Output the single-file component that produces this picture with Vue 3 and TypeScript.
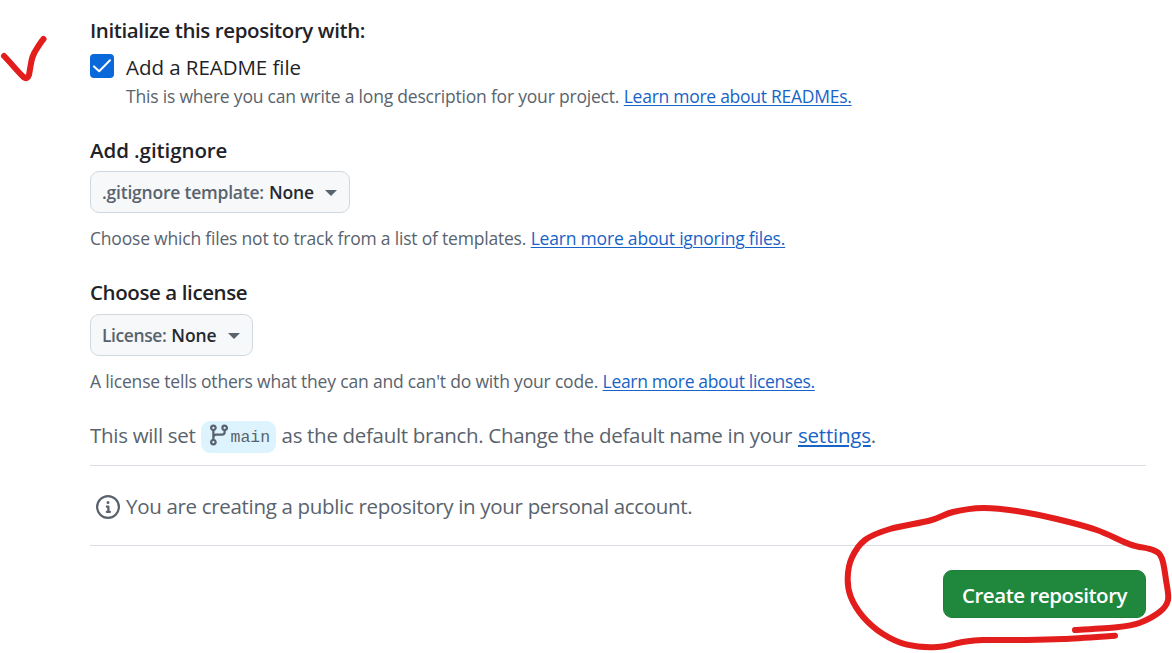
<script setup lang="ts">
import { ref } from 'vue'

const addReadme = ref(true)

type Point = [number, number]

const loop: Point[] = [
  [1115, 635.7], [1063, 639], [1027, 640], [983, 640], [963, 642], [937, 647], [907, 644.7],
  [883, 634], [863, 616.7], [850.7, 596.7], [847.7, 578], [851.7, 558], [865, 540], [890, 529],
  [930, 520.5], [953, 512], [983, 508], [1016.7, 511], [1056.7, 519], [1096.7, 530],
  [1130, 544.3], [1153, 550], [1161.7, 558], [1166, 580], [1168, 600], [1160, 611.7],
  [1140, 622.7], [1116.7, 627.3], [1075, 630],
]

// Smooth curve through all points (Catmull-Rom converted to cubic Béziers).
function smooth(points: Point[]): string {
  let d = `M${points[0][0]} ${points[0][1]}`
  for (let i = 0; i < points.length - 1; i++) {
    const a = points[Math.max(i - 1, 0)]
    const b = points[i]
    const c = points[i + 1]
    const e = points[Math.min(i + 2, points.length - 1)]
    d += `C${b[0] + (c[0] - a[0]) / 6} ${b[1] + (c[1] - a[1]) / 6} ${c[0] - (e[0] - b[0]) / 6} ${c[1] - (e[1] - b[1]) / 6} ${c[0]} ${c[1]}`
  }
  return d
}

const loopPath = smooth(loop)
</script>

<template>
  <main class="page">
    <form class="form" @submit.prevent>
      <h3 class="title t-init">Initialize this repository with:</h3>
      <div class="check-row">
        <button type="button" class="box" :class="{ on: addReadme }" @click="addReadme = !addReadme">
          <svg v-if="addReadme" width="24" height="24" viewBox="0 0 24 24" fill="none">
            <path d="M4 12.400 9.200 17.200 20 6.200" stroke="#fff" stroke-width="2" stroke-linecap="round" stroke-linejoin="round" />
          </svg>
        </button>
        <span class="check-label">Add a README file</span>
      </div>
      <p class="hint indent"><span class="h-readme">This is where you can write a long description for your project.</span> <a class="l-readme">Learn more about READMEs.</a></p>

      <h3 class="title gap t-git">Add .gitignore</h3>
      <button type="button" class="select s-git">
        <span class="key k-git">.gitignore template:</span><span class="val">None</span><i class="caret"></i>
      </button>
      <p class="hint under"><span class="h-git">Choose which files not to track from a list of templates.</span> <a class="l-git">Learn more about ignoring files.</a></p>

      <h3 class="title gap t-lic">Choose a license</h3>
      <button type="button" class="select s-lic">
        <span class="key k-lic">License:</span><span class="val">None</span><i class="caret"></i>
      </button>
      <p class="hint under"><span class="h-lic">A license tells others what they can and can't do with your code.</span> <a class="l-lic">Learn more about licenses.</a></p>

      <div class="branch-row">
        <span class="b-text b-start">This will set</span>
        <span class="branch">
          <svg width="24" height="24" viewBox="0 0 16 16" fill="#59636e">
            <path d="M9.5 3.25a2.25 2.25 0 1 1 3 2.122V6A2.5 2.5 0 0 1 10 8.5H6a1 1 0 0 0-1 1v1.128a2.251 2.251 0 1 1-1.5 0V5.372a2.25 2.25 0 1 1 1.5 0v1.836A2.493 2.493 0 0 1 6 7h4a1 1 0 0 0 1-1v-.628A2.25 2.25 0 0 1 9.5 3.25Zm-6 0a.75.75 0 1 0 1.5 0 .75.75 0 0 0-1.5 0Zm8.25-.75a.75.75 0 1 0 0 1.5.75.75 0 0 0 0-1.5ZM4.25 12a.75.75 0 1 0 0 1.5.75.75 0 0 0 0-1.5Z" />
          </svg>
          <code>main</code>
        </span>
        <span class="b-text b-end">as the default branch. Change the default name in your</span>
        <a class="b-text settings">settings</a><span class="b-text">.</span>
      </div>

      <div class="notice">
        <svg width="24" height="24" viewBox="0 0 16 16" fill="#59636e">
          <path d="M0 8a8 8 0 1 1 16 0A8 8 0 0 1 0 8Zm8-6.5a6.5 6.5 0 1 0 0 13 6.5 6.5 0 0 0 0-13ZM6.5 7.75A.75.75 0 0 1 7.25 7h1a.75.75 0 0 1 .75.75v2.75h.25a.75.75 0 0 1 0 1.5h-2a.75.75 0 0 1 0-1.5h.25v-2h-.25a.75.75 0 0 1-.75-.75ZM8 6a1 1 0 1 1 0-2 1 1 0 0 1 0 2Z" />
        </svg>
        <span class="n-text">You are creating a public repository in your personal account.</span>
      </div>

      <div class="actions">
        <button type="submit" class="create"><span>Create repository</span></button>
      </div>
    </form>

    <svg class="ink" width="1172" height="653" viewBox="0 0 1172 653" fill="none" stroke="#e31c1c" stroke-width="6" stroke-linecap="round" stroke-linejoin="round">
      <path d="M4 56C11 63 17 71 23.500 77Q27.500 80 29 75C31.500 62 31 57 36 50C39 45 41 42 43.500 39" />
      <path :d="loopPath" />
    </svg>
  </main>
</template>

<style>
body {
  margin: 0;
  background: #fff;
}
</style>

<style scoped>
.page {
  position: relative;
  width: 1172px;
  height: 653px;
  overflow: hidden;
  box-sizing: border-box;
  padding: 15px 26px 0 90px;
  background: #fff;
  color: #1f2328;
  font-family: 'Open Sans', 'Noto Sans', sans-serif;
}
.form {
  display: flex;
  flex-direction: column;
}
button {
  font-family: inherit;
  margin: 0;
  padding: 0;
}
.title {
  margin: 0;
  height: 32px;
  line-height: 30px;
  font-size: 20.5px;
  font-weight: 600;
  white-space: nowrap;
}
.title.gap {
  margin-top: 24px;
}
.t-init {
  letter-spacing: -0.4px;
}
.t-git {
  letter-spacing: -0.08px;
}
.t-lic {
  letter-spacing: -0.4px;
}
.check-row {
  display: flex;
  gap: 12px;
  height: 32px;
  margin-top: 4px;
}
.box {
  width: 24px;
  height: 24px;
  margin-top: 3px;
  border: 1px solid #818b98;
  border-radius: 4px;
  background: #fff;
  box-sizing: border-box;
}
.box.on {
  border: 0;
  background: #0969da;
}
.box svg {
  display: block;
}
.check-label {
  font-size: 20.5px;
  line-height: 33px;
  letter-spacing: -0.05px;
}
.hint {
  margin: 0;
  height: 28px;
  line-height: 26px;
  font-size: 17.5px;
  color: #59636e;
  white-space: nowrap;
}
.h-readme,
.h-git {
  letter-spacing: -0.2px;
}
.h-lic {
  letter-spacing: -0.18px;
}
.l-readme {
  letter-spacing: -0.27px;
}
.l-git {
  letter-spacing: -0.2px;
}
.l-lic {
  letter-spacing: -0.33px;
}
.indent {
  padding-left: 36px;
}
.under {
  margin-top: 12px;
}
a {
  color: #1763c7;
  text-decoration: underline;
  text-decoration-thickness: 1px;
  text-underline-offset: 2px;
}
.select {
  display: flex;
  align-items: center;
  box-sizing: border-box;
  height: 42px;
  margin-top: 4px;
  padding: 0 12px 0 11px;
  border: 1px solid #d1d9e0;
  border-radius: 9px;
  background: #f6f8fa;
  font-size: 17.5px;
  font-weight: 600;
  white-space: nowrap;
}
.s-git {
  width: 260px;
}
.s-lic {
  width: 163px;
  margin-top: 5px;
}
.key {
  color: #59636e;
}
.k-git {
  letter-spacing: -0.22px;
}
.k-lic {
  letter-spacing: -0.42px;
}
.val {
  margin-left: 5px;
  letter-spacing: -0.15px;
  color: #25292e;
}
.caret {
  margin-left: auto;
  margin-top: 2px;
  border: 6px solid transparent;
  border-top-color: #59636e;
  border-bottom: 0;
}
.branch-row {
  display: flex;
  align-items: center;
  height: 32px;
  margin-top: 24px;
  padding-bottom: 13px;
  border-bottom: 1px solid #d9dfe4;
  font-size: 20.5px;
  line-height: 28px;
  color: #59636e;
  white-space: nowrap;
}
.b-text {
  margin-bottom: 2px;
}
.b-start {
  letter-spacing: -0.3px;
}
.b-end {
  letter-spacing: -0.31px;
}
.branch {
  display: flex;
  align-items: center;
  box-sizing: border-box;
  width: 75px;
  height: 32px;
  margin: 1px 6px 0 5px;
  padding-left: 6px;
  border-radius: 9px;
  background: #ddf4ff;
}
.branch svg {
  margin-top: -4px;
}
.branch code {
  margin-top: 2px;
  font-family: 'Liberation Mono', monospace;
  font-size: 16.5px;
}
.settings {
  margin-left: 6px;
  letter-spacing: -0.22px;
  text-decoration-thickness: 2px;
}
.notice {
  display: flex;
  align-items: center;
  gap: 6px;
  height: 79px;
  padding: 0 0 0 6px;
  border-bottom: 1px solid #d9dfe4;
  font-size: 20.5px;
  line-height: 28px;
  color: #59636e;
  white-space: nowrap;
}
.notice svg {
  margin-top: 3px;
}
.n-text {
  letter-spacing: -0.32px;
}
.actions {
  display: flex;
  justify-content: flex-end;
  margin-top: 24px;
}
.create {
  width: 203px;
  height: 48px;
  padding-top: 2px;
  border: 1px solid #1f7f39;
  border-radius: 9px;
  background: #1f883d;
  color: #fff;
  font-size: 20.5px;
  font-weight: 600;
  letter-spacing: -0.45px;
  white-space: nowrap;
}
.ink {
  position: absolute;
  left: 0;
  top: 0;
  pointer-events: none;
}
</style>
